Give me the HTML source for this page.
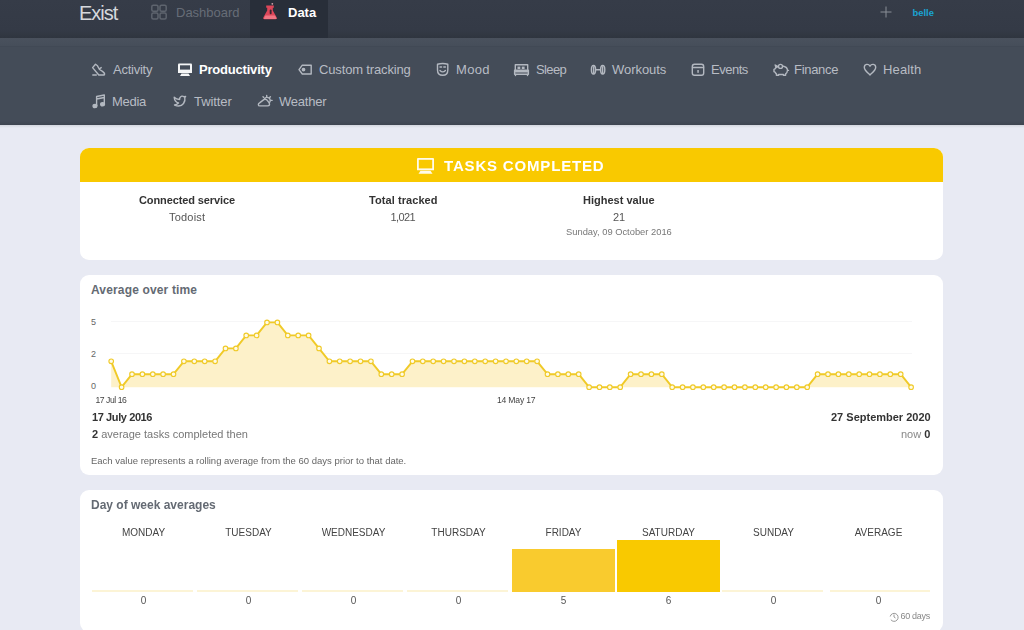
<!DOCTYPE html>
<html><head><meta charset="utf-8">
<style>
*{margin:0;padding:0;box-sizing:border-box}
html,body{width:1024px;height:630px;overflow:hidden;background:#e8eaf3;font-family:"Liberation Sans",sans-serif}
.abs{position:absolute}
.t{position:absolute;white-space:nowrap;line-height:1}
.nav{color:#b8bcc4;font-size:13px}
.ic{position:absolute;overflow:visible}
.card{position:absolute;left:80px;width:863px;background:#fff;border-radius:9px}
.st{font-size:11px;color:#333;font-weight:bold}
.sv{font-size:11px;color:#555}
.day{position:absolute;top:528.2px;width:105px;text-align:center;font-size:10px;color:#444;line-height:1}
.dv{position:absolute;top:596.4px;width:105px;text-align:center;font-size:10px;color:#555;line-height:1}
.base{position:absolute;top:590px;height:2px;background:#fcf4d6}
</style></head><body><div id="wrap" style="position:absolute;left:0;top:0;width:1024px;height:630px;filter:blur(0.4px)">
<div class="abs" style="left:0;top:0;width:1024px;height:38px;background:linear-gradient(#363c48 0,#343a46 30px,#2f353f 38px)"></div>
<div class="abs" style="left:0;top:38px;width:1024px;height:87px;background:#444c58"></div>
<div class="abs" style="left:0;top:38px;width:1024px;height:8px;background:linear-gradient(#4a515d,#464e5a)"></div>
<div class="abs" style="left:0;top:46px;width:1024px;height:1px;background:#414955"></div>
<div class="abs" style="left:0;top:121px;width:1024px;height:4px;background:linear-gradient(#444c58,#3e4550)"></div>
<div class="abs" style="left:0;top:125px;width:1024px;height:3px;background:linear-gradient(#d3d6de,#e8eaf3)"></div>

<!-- top bar -->
<div class="t" id="exist" style="left:79px;top:2.5px;font-size:20px;letter-spacing:-1px;color:#d5d8dd">Exist</div>
<svg class="ic" style="left:150px;top:4px" width="18" height="16" viewBox="0 0 18 16" fill="none" stroke="#5e646e" stroke-width="1.5">
<rect x="1.8" y="1.3" width="6.2" height="6" rx="1.5"/><rect x="10" y="1.3" width="6.2" height="6" rx="1.5"/>
<rect x="1.8" y="9" width="6.2" height="6" rx="1.5"/><rect x="10" y="9" width="6.2" height="6" rx="1.5"/></svg>
<div class="t" id="dash" style="left:176px;top:6px;font-size:13px;color:#676d77">Dashboard</div>
<div class="abs" style="left:250px;top:0;width:78px;height:38px;background:#282e39"></div>
<svg class="ic" style="left:0;top:0" width="400" height="38" viewBox="0 0 400 38">
<circle cx="272.3" cy="3.8" r="0.9" fill="#d9a3ab"/>
<path d="M266.2 5.6 h7.6 v2.2 h-1 v2.8 l3.9 6.9 q0.8 1.8 -1.2 1.8 h-11 q-2 0 -1.2 -1.8 l3.9 -6.9 v-2.8 h-1z" fill="#dd4659"/>
<rect x="269.7" y="9.6" width="1.9" height="4.6" rx="0.9" fill="#3b2631"/>
<path d="M265.4 15.6 h9.6 l1.5 2.6 q0.3 0.8 -0.6 0.8 h-11.4 q-0.9 0 -0.6 -0.8z" fill="#ef7583"/>
</svg>
<div class="t" id="data" style="left:288px;top:6px;font-size:13px;color:#fff;font-weight:bold">Data</div>
<svg class="ic" style="left:880px;top:6px" width="12" height="12" viewBox="0 0 12 12" stroke="#8a8f97" stroke-width="1"><line x1="6" y1="0.5" x2="6" y2="11.5"/><line x1="0.5" y1="6" x2="11.5" y2="6"/></svg>
<div class="t" id="belle" style="left:912.5px;top:7.5px;font-size:9.4px;color:#1aa4d3;font-weight:bold">belle</div>

<!-- sub nav icons -->
<svg class="ic" style="left:0;top:0" width="1024" height="125" viewBox="0 0 1024 125" fill="none" stroke="#b3b8c0" stroke-width="1.4" stroke-linejoin="round" stroke-linecap="round">
 <!-- activity shoe -->
 <path d="M95.5 64.2 L92.6 67.6 L98.8 75 L104.3 75 C105.2 73.5 104 72.3 102.5 71.3 L99.5 69.5 L97.5 65.8z M92.8 75 h3.5 M99.6 68.8 l1.6-1.2"/>
 <!-- custom tracking tag -->
 <path d="M299 69.6 L302.3 65.2 H311.2 V74 H302.3z"/><circle cx="303.5" cy="69.6" r="1.2" fill="#b3b8c0"/>
 <!-- mood mask -->
 <path d="M437.5 64.2 Q442.7 62.8 447.8 64.2 V70 Q447.8 75.3 442.7 75.3 Q437.5 75.3 437.5 70z"/>
 <path d="M440 67 h1.6 M443.8 67 h1.6 M440 70.5 Q442.7 73.3 445.4 70.5"/>
 <!-- sleep bed -->
 <path d="M515.3 69.5 V64.8 H527.7 V69.5"/><rect x="517.5" y="66.6" width="2.8" height="2.4" fill="#b3b8c0" stroke="none"/><rect x="521.8" y="66.6" width="2.8" height="2.4" fill="#b3b8c0" stroke="none"/>
 <path d="M514.6 70.2 H528.4 V74.3 H514.6z M514.6 71.8 H528.4"/><path d="M515.5 74.5v1 M527.5 74.5v1"/>
 <!-- workouts dumbbell -->
 <path d="M591.4 69.7 Q591.4 65.4 593.5 65.4 Q595.6 65.4 595.6 69.7 Q595.6 74 593.5 74 Q591.4 74 591.4 69.7z M593.6 66.8 V72.6 M600.6 69.7 Q600.6 65.4 602.7 65.4 Q604.8 65.4 604.8 69.7 Q604.8 74 602.7 74 Q600.6 74 600.6 69.7z M602.6 66.8 V72.6 M595.6 69.7 H600.6"/>
 <!-- events calendar -->
 <rect x="692.3" y="64.3" width="11.4" height="11" rx="2.2"/><path d="M692.5 67.5 H703.5"/><rect x="697.3" y="70" width="1.5" height="2.8" fill="#b3b8c0" stroke="none"/>
 <!-- finance piggy -->
 <path d="M776.4 67.3 Q779.5 65.7 783.5 66.2 Q787.3 67 787.5 70.2 Q787.3 72.8 785.6 73.8 V75.2 H783.4 V74.5 H778.6 V75.2 H776.4 V73.9 Q775.4 73.2 775 72.1 L774 71.7 V69.3 L775 68.9 Q775.5 67.9 776.4 67.3z M787.5 70.4 h1 M776 67.6 L775.2 65 L777.6 66.3"/>
 <circle cx="780.5" cy="66.4" r="2" fill="#444c58"/>
 <!-- health heart -->
 <path d="M870 66.2 C868.6 63.5 864.3 63.8 864.3 67.3 C864.3 70.5 867.8 72.8 870 75 C872.2 72.8 875.7 70.5 875.7 67.3 C875.7 63.8 871.4 63.5 870 66.2z"/>
 <!-- media note -->
 <path d="M96.6 105.5 V96.5 L104.3 95 V103.5 M96.6 99 L104.3 97.5"/><ellipse cx="95" cy="106" rx="1.9" ry="1.6" fill="#b3b8c0"/><ellipse cx="102.6" cy="104.2" rx="1.9" ry="1.6" fill="#b3b8c0"/>
 <!-- twitter bird -->
 <path d="M174.2 97.3 Q174.6 102 178.5 103 Q176.8 104.8 174.5 105 Q180.5 107.5 183.5 103.5 Q185.5 100.5 184.8 97.5 L185.6 96.5 L184.2 96.8 Q181.5 95 179.8 97.8 L179.6 99.5 Q176.3 99.5 174.2 97.3z"/>
 <!-- weather -->
 <path d="M259.8 105.9 C257.9 105.9 257.9 103.7 259.6 102.9 L263.8 99.6 Q265.9 98.4 267.3 100.4 L269.2 102.9 Q270.3 105.9 267.6 105.9 Z"/>
 <path d="M264.6 98.6 A2.8 2.8 0 1 1 269.6 102.4"/>
 <path d="M266.7 95.4 v1.2 M270.4 96.8 l-0.8 0.8 M272.1 100.4 h-1.2 M263 96.8 l0.8 0.8"/>
 <!-- productivity monitor (white) -->
</svg>
<svg class="ic" style="left:177px;top:63px" width="16" height="14" viewBox="0 0 16 14">
 <path d="M2 0.5 H14 Q15 0.5 15 1.5 V10 H1 V1.5 Q1 0.5 2 0.5z" fill="#f4f5f6"/>
 <rect x="3" y="2.3" width="10" height="4.3" fill="#444c58"/>
 <path d="M4.5 10.5 H11.5 L13 13 H3z" fill="#f4f5f6"/>
</svg>

<!-- sub nav row 1 -->
<div class="t nav" id="n_act" style="left:113px;top:62.7px;letter-spacing:-0.25px">Activity</div>
<div class="t nav" id="n_prod" style="left:199px;top:62.7px;letter-spacing:-0.2px;color:#fff;font-weight:bold">Productivity</div>
<div class="t nav" id="n_cust" style="left:319px;top:62.7px;letter-spacing:-0.15px">Custom tracking</div>
<div class="t nav" id="n_mood" style="left:456px;top:62.7px;letter-spacing:0.35px">Mood</div>
<div class="t nav" id="n_sleep" style="left:536px;top:62.7px;letter-spacing:-0.6px">Sleep</div>
<div class="t nav" id="n_work" style="left:612px;top:62.7px;letter-spacing:-0.05px">Workouts</div>
<div class="t nav" id="n_ev" style="left:711px;top:62.7px;letter-spacing:-0.5px">Events</div>
<div class="t nav" id="n_fin" style="left:794px;top:62.7px;letter-spacing:-0.3px">Finance</div>
<div class="t nav" id="n_hea" style="left:883px;top:62.7px;letter-spacing:0.15px">Health</div>
<div class="t nav" id="n_med" style="left:112px;top:94.5px;letter-spacing:-0.3px">Media</div>
<div class="t nav" id="n_tw" style="left:194px;top:94.5px;letter-spacing:-0.07px">Twitter</div>
<div class="t nav" id="n_wea" style="left:279px;top:94.5px;letter-spacing:-0.23px">Weather</div>

<!-- card 1 -->
<div class="card" style="top:148px;height:112px;overflow:hidden">
  <div class="abs" style="left:0;top:0;width:863px;height:34px;background:#f9c900"></div>
</div>
<svg class="ic" style="left:416px;top:157px" width="19" height="17" viewBox="0 0 19 17">
 <path d="M2 1 H17 Q18 1 18 2 V13.3 H1 V2 Q1 1 2 1z" fill="#fffbea"/>
 <rect x="2.8" y="2.8" width="13.4" height="8.6" fill="#f9c900"/>
 <path d="M4.5 13.8 H14.5 L16.5 16.8 H2.5z" fill="#fffbea"/>
</svg>
<div class="t" id="title" style="left:444px;top:157.5px;font-size:15px;color:#fff;font-weight:bold;letter-spacing:0.83px">TASKS COMPLETED</div>
<div class="t st" id="s_cs" style="left:139px;top:195px;letter-spacing:-0.11px">Connected service</div>
<div class="t sv" id="s_tod" style="left:169px;top:211.5px;letter-spacing:0.2px">Todoist</div>
<div class="t st" id="s_tt" style="left:369px;top:195px;letter-spacing:0.07px">Total tracked</div>
<div class="t sv" id="s_1021" style="left:390.5px;top:212px;letter-spacing:-0.6px">1,021</div>
<div class="t st" id="s_hv" style="left:583px;top:195px">Highest value</div>
<div class="t sv" id="s_21" style="left:613px;top:212px">21</div>
<div class="t" id="s_sun" style="left:566px;top:228px;font-size:9.35px;color:#777">Sunday, 09 October 2016</div>

<!-- card 2 -->
<div class="card" style="top:275px;height:200px"></div>
<div class="t" id="aot" style="left:91px;top:284px;letter-spacing:0.15px;font-size:12px;font-weight:bold;color:#646a73">Average over time</div>
<div class="t" id="y5" style="left:91px;top:318px;font-size:9px;color:#666">5</div>
<div class="t" id="y2" style="left:91px;top:350px;font-size:9px;color:#666">2</div>
<div class="t" id="y0" style="left:91px;top:382px;font-size:9px;color:#666">0</div>
<svg class="abs" style="left:0;top:0" width="1024" height="630" viewBox="0 0 1024 630">
<g stroke="#f6f6f7" stroke-width="1"><line x1="111" y1="321.5" x2="912" y2="321.5"/><line x1="111" y1="353.5" x2="912" y2="353.5"/></g>
<polygon fill="#fdf1c9" points="111.2,361.3 121.6,387.2 132.0,374.2 142.4,374.2 152.8,374.2 163.1,374.2 173.5,374.2 183.9,361.3 194.3,361.3 204.7,361.3 215.1,361.3 225.5,348.4 235.9,348.4 246.2,335.4 256.6,335.4 267.0,322.4 277.4,322.4 287.8,335.4 298.2,335.4 308.6,335.4 319.0,348.4 329.4,361.3 339.7,361.3 350.1,361.3 360.5,361.3 370.9,361.3 381.3,374.2 391.7,374.2 402.1,374.2 412.5,361.3 422.8,361.3 433.2,361.3 443.6,361.3 454.0,361.3 464.4,361.3 474.8,361.3 485.2,361.3 495.6,361.3 506.0,361.3 516.3,361.3 526.7,361.3 537.1,361.3 547.5,374.2 557.9,374.2 568.3,374.2 578.7,374.2 589.1,387.2 599.5,387.2 609.8,387.2 620.2,387.2 630.6,374.2 641.0,374.2 651.4,374.2 661.8,374.2 672.2,387.2 682.6,387.2 692.9,387.2 703.3,387.2 713.7,387.2 724.1,387.2 734.5,387.2 744.9,387.2 755.3,387.2 765.7,387.2 776.1,387.2 786.4,387.2 796.8,387.2 807.2,387.2 817.6,374.2 828.0,374.2 838.4,374.2 848.8,374.2 859.2,374.2 869.5,374.2 879.9,374.2 890.3,374.2 900.7,374.2 911.1,387.2 911.1,387.2 111.2,387.2"/>
<polyline fill="none" stroke="#f0ca28" stroke-width="1.9" stroke-linejoin="round" points="111.2,361.3 121.6,387.2 132.0,374.2 142.4,374.2 152.8,374.2 163.1,374.2 173.5,374.2 183.9,361.3 194.3,361.3 204.7,361.3 215.1,361.3 225.5,348.4 235.9,348.4 246.2,335.4 256.6,335.4 267.0,322.4 277.4,322.4 287.8,335.4 298.2,335.4 308.6,335.4 319.0,348.4 329.4,361.3 339.7,361.3 350.1,361.3 360.5,361.3 370.9,361.3 381.3,374.2 391.7,374.2 402.1,374.2 412.5,361.3 422.8,361.3 433.2,361.3 443.6,361.3 454.0,361.3 464.4,361.3 474.8,361.3 485.2,361.3 495.6,361.3 506.0,361.3 516.3,361.3 526.7,361.3 537.1,361.3 547.5,374.2 557.9,374.2 568.3,374.2 578.7,374.2 589.1,387.2 599.5,387.2 609.8,387.2 620.2,387.2 630.6,374.2 641.0,374.2 651.4,374.2 661.8,374.2 672.2,387.2 682.6,387.2 692.9,387.2 703.3,387.2 713.7,387.2 724.1,387.2 734.5,387.2 744.9,387.2 755.3,387.2 765.7,387.2 776.1,387.2 786.4,387.2 796.8,387.2 807.2,387.2 817.6,374.2 828.0,374.2 838.4,374.2 848.8,374.2 859.2,374.2 869.5,374.2 879.9,374.2 890.3,374.2 900.7,374.2 911.1,387.2"/>
<g fill="#fffbe8" stroke="#f0ca28" stroke-width="1.1"><circle cx="111.2" cy="361.3" r="2.3"/><circle cx="121.6" cy="387.2" r="2.3"/><circle cx="132.0" cy="374.2" r="2.3"/><circle cx="142.4" cy="374.2" r="2.3"/><circle cx="152.8" cy="374.2" r="2.3"/><circle cx="163.1" cy="374.2" r="2.3"/><circle cx="173.5" cy="374.2" r="2.3"/><circle cx="183.9" cy="361.3" r="2.3"/><circle cx="194.3" cy="361.3" r="2.3"/><circle cx="204.7" cy="361.3" r="2.3"/><circle cx="215.1" cy="361.3" r="2.3"/><circle cx="225.5" cy="348.4" r="2.3"/><circle cx="235.9" cy="348.4" r="2.3"/><circle cx="246.2" cy="335.4" r="2.3"/><circle cx="256.6" cy="335.4" r="2.3"/><circle cx="267.0" cy="322.4" r="2.3"/><circle cx="277.4" cy="322.4" r="2.3"/><circle cx="287.8" cy="335.4" r="2.3"/><circle cx="298.2" cy="335.4" r="2.3"/><circle cx="308.6" cy="335.4" r="2.3"/><circle cx="319.0" cy="348.4" r="2.3"/><circle cx="329.4" cy="361.3" r="2.3"/><circle cx="339.7" cy="361.3" r="2.3"/><circle cx="350.1" cy="361.3" r="2.3"/><circle cx="360.5" cy="361.3" r="2.3"/><circle cx="370.9" cy="361.3" r="2.3"/><circle cx="381.3" cy="374.2" r="2.3"/><circle cx="391.7" cy="374.2" r="2.3"/><circle cx="402.1" cy="374.2" r="2.3"/><circle cx="412.5" cy="361.3" r="2.3"/><circle cx="422.8" cy="361.3" r="2.3"/><circle cx="433.2" cy="361.3" r="2.3"/><circle cx="443.6" cy="361.3" r="2.3"/><circle cx="454.0" cy="361.3" r="2.3"/><circle cx="464.4" cy="361.3" r="2.3"/><circle cx="474.8" cy="361.3" r="2.3"/><circle cx="485.2" cy="361.3" r="2.3"/><circle cx="495.6" cy="361.3" r="2.3"/><circle cx="506.0" cy="361.3" r="2.3"/><circle cx="516.3" cy="361.3" r="2.3"/><circle cx="526.7" cy="361.3" r="2.3"/><circle cx="537.1" cy="361.3" r="2.3"/><circle cx="547.5" cy="374.2" r="2.3"/><circle cx="557.9" cy="374.2" r="2.3"/><circle cx="568.3" cy="374.2" r="2.3"/><circle cx="578.7" cy="374.2" r="2.3"/><circle cx="589.1" cy="387.2" r="2.3"/><circle cx="599.5" cy="387.2" r="2.3"/><circle cx="609.8" cy="387.2" r="2.3"/><circle cx="620.2" cy="387.2" r="2.3"/><circle cx="630.6" cy="374.2" r="2.3"/><circle cx="641.0" cy="374.2" r="2.3"/><circle cx="651.4" cy="374.2" r="2.3"/><circle cx="661.8" cy="374.2" r="2.3"/><circle cx="672.2" cy="387.2" r="2.3"/><circle cx="682.6" cy="387.2" r="2.3"/><circle cx="692.9" cy="387.2" r="2.3"/><circle cx="703.3" cy="387.2" r="2.3"/><circle cx="713.7" cy="387.2" r="2.3"/><circle cx="724.1" cy="387.2" r="2.3"/><circle cx="734.5" cy="387.2" r="2.3"/><circle cx="744.9" cy="387.2" r="2.3"/><circle cx="755.3" cy="387.2" r="2.3"/><circle cx="765.7" cy="387.2" r="2.3"/><circle cx="776.1" cy="387.2" r="2.3"/><circle cx="786.4" cy="387.2" r="2.3"/><circle cx="796.8" cy="387.2" r="2.3"/><circle cx="807.2" cy="387.2" r="2.3"/><circle cx="817.6" cy="374.2" r="2.3"/><circle cx="828.0" cy="374.2" r="2.3"/><circle cx="838.4" cy="374.2" r="2.3"/><circle cx="848.8" cy="374.2" r="2.3"/><circle cx="859.2" cy="374.2" r="2.3"/><circle cx="869.5" cy="374.2" r="2.3"/><circle cx="879.9" cy="374.2" r="2.3"/><circle cx="890.3" cy="374.2" r="2.3"/><circle cx="900.7" cy="374.2" r="2.3"/><circle cx="911.1" cy="387.2" r="2.3"/></g>
</svg>
<div class="t" id="l17" style="left:95.5px;top:396px;font-size:8.6px;letter-spacing:-0.45px;color:#444">17 Jul 16</div>
<div class="t" id="l14" style="left:497px;top:396px;font-size:8.6px;letter-spacing:-0.2px;color:#444">14 May 17</div>
<div class="t" id="d1" style="left:92px;top:412px;letter-spacing:-0.4px;font-size:11px;font-weight:bold;color:#333">17 July 2016</div>
<div class="t" id="avg" style="left:92px;top:429px;font-size:11px;color:#777"><b style="color:#333">2</b> average tasks completed then</div>
<div class="t" id="d2" style="left:831px;top:412px;font-size:11px;font-weight:bold;color:#333">27 September 2020</div>
<div class="t" id="now" style="left:901px;top:429px;font-size:11px;color:#888">now <b style="color:#333">0</b></div>
<div class="t" id="each" style="left:91px;top:456px;font-size:9.5px;color:#666">Each value represents a rolling average from the 60 days prior to that date.</div>

<!-- card 3 -->
<div class="card" style="top:490px;height:142px"></div>
<div class="t" id="dow" style="left:91px;top:499px;font-size:12px;font-weight:bold;color:#646a73">Day of week averages</div>
<div class="day" style="left:91px">MONDAY</div>
<div class="day" style="left:196px">TUESDAY</div>
<div class="day" style="left:301px">WEDNESDAY</div>
<div class="day" style="left:406px">THURSDAY</div>
<div class="day" style="left:511px">FRIDAY</div>
<div class="day" style="left:616px">SATURDAY</div>
<div class="day" style="left:721px">SUNDAY</div>
<div class="day" style="left:826px">AVERAGE</div>
<div class="base" style="left:92px;width:101px"></div>
<div class="base" style="left:197px;width:101px"></div>
<div class="base" style="left:302px;width:101px"></div>
<div class="base" style="left:407px;width:101px"></div>
<div class="base" style="left:722px;width:101px"></div>
<div class="base" style="left:830px;width:100px"></div>
<div class="abs" style="left:512px;top:549px;width:103px;height:43px;background:#f9cb2e"></div>
<div class="abs" style="left:617px;top:540px;width:103px;height:52px;background:#f9c900"></div>
<div class="dv" style="left:91px">0</div>
<div class="dv" style="left:196px">0</div>
<div class="dv" style="left:301px">0</div>
<div class="dv" style="left:406px">0</div>
<div class="dv" style="left:511px">5</div>
<div class="dv" style="left:616px">6</div>
<div class="dv" style="left:721px">0</div>
<div class="dv" style="left:826px">0</div>
<svg class="ic" style="left:889px;top:612px" width="10" height="10" viewBox="0 0 10 10" fill="none" stroke="#999" stroke-width="1"><path d="M1.8 7.6 A4 4 0 1 0 1.2 4.5"/><path d="M5 2.5 V5 L6.5 6"/></svg>
<div class="t" id="days60" style="left:900.5px;top:612px;font-size:9px;letter-spacing:-0.3px;color:#888">60 days</div>
</div></body></html>
